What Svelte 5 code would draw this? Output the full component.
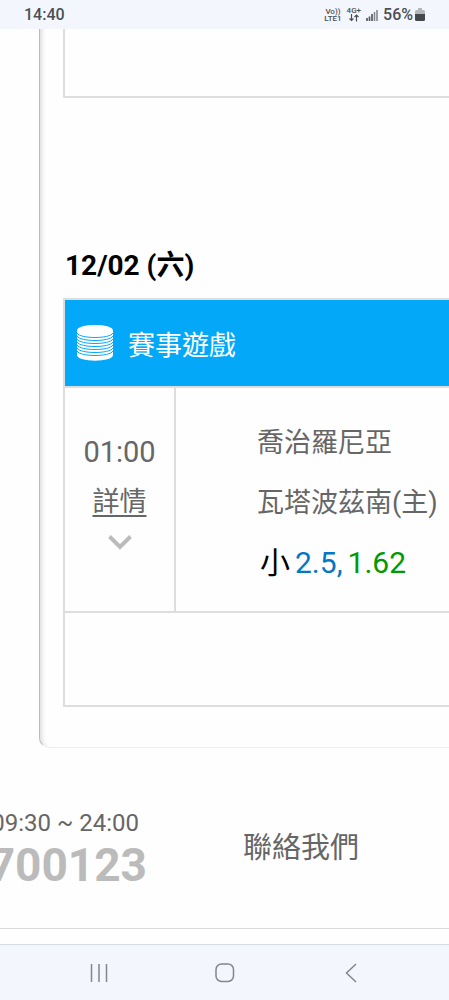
<script lang="ts">
  type Pick = { side: string; line: string; odds: string };
  type Match = { time: string; away: string; home: string; pick: Pick };

  const date = "12/02 (六)";
  const matches: Match[] = [
    {
      time: "01:00",
      away: "喬治羅尼亞",
      home: "瓦塔波茲南(主)",
      pick: { side: "小", line: "2.5,", odds: "1.62" },
    },
  ];
  const grooves = [8, 11, 14, 17, 20, 23, 26];
</script>

<div class="screen">
  <header class="status">
    <time>14:40</time>
    <div class="status-right">
      <div class="net"><span>Vo))</span><span>LTE1</span></div>
      <div class="net">
        <span>4G+</span>
        <svg width="10" height="8" viewBox="0 0 10 8" aria-hidden="true">
          <path d="M2.5 0v6.500M.5 4.500l2 2 2-2M7.500 7.500V1M5.500 3l2-2 2 2" fill="none" stroke="currentColor" stroke-width="1.200" />
        </svg>
      </div>
      <svg width="12" height="12" viewBox="0 0 12 12" aria-hidden="true">
        <path d="M1 12V9M3.5 12V7.5M6 12V5" stroke="#4c4f53" stroke-width="1.6" />
        <path d="M8.5 12V3M11 12V1" stroke="#85898d" stroke-width="1.6" />
      </svg>
      <span class="percent">56%</span>
      <svg width="10" height="13" viewBox="0 0 10 13" aria-hidden="true">
        <path d="M3 0h4v2h1.5q1.5 0 1.5 1.5V6H0V3.5Q0 2 1.5 2H3z" fill="#b4b7ba" />
        <path d="M0 6h10v5.5q0 1.5-1.5 1.5h-7Q0 13 0 11.5z" fill="#46494c" />
      </svg>
    </div>
  </header>

  <main class="sheet">
    <div class="prev-block"></div>

    <h2 class="date">{date}</h2>

    <table class="coupon">
      <thead>
        <tr>
          <th colspan="2">
            <div class="title">
              <svg width="36" height="36" viewBox="0 0 36 36" aria-hidden="true">
                <path d="M0 5.500C0-1.800 36-1.800 36 5.500V30C36 37.500 0 37.500 0 30z" fill="#fff" />
                {#each grooves as y (y)}
                  <path d="M0 {y}C3 {y + 6} 33 {y + 6} 36 {y}" fill="none" stroke="#03a9f8" stroke-width="1" />
                {/each}
              </svg>
              賽事遊戲
            </div>
          </th>
        </tr>
      </thead>
      <tbody>
        {#each matches as m (m.time)}
          <tr>
            <td class="when">
              <div class="stack">
                <time>{m.time}</time>
                <a href="#detail">詳情</a>
                <svg width="24" height="15" viewBox="0 0 24 15" aria-hidden="true">
                  <path d="M1.5 1.5 12 12 22.5 1.5" fill="none" stroke="#bbb" stroke-width="4" />
                </svg>
              </div>
            </td>
            <td class="teams">
              <div>{m.away}</div>
              <div>{m.home}</div>
              <div class="pick">
                <span>{m.pick.side}</span>
                <span class="line">{m.pick.line}</span>
                <span class="odds">{m.pick.odds}</span>
              </div>
            </td>
          </tr>
        {/each}
        <tr><td class="blank" colspan="2"></td></tr>
      </tbody>
    </table>
  </main>

  <footer class="footer">
    <div class="service">
      <span class="hours">09:30 ~ 24:00</span>
      <span class="phone">700123</span>
    </div>
    <a class="contact" href="#contact">聯絡我們</a>
  </footer>

  <nav class="navbar">
    <button aria-label="Recents">
      <svg width="18" height="18" viewBox="0 0 18 18">
        <path d="M1.5 0v18M9 0v18M16.5 0v18" />
      </svg>
    </button>
    <button aria-label="Home">
      <svg width="20" height="20" viewBox="0 0 20 20">
        <rect x="1" y="1" width="17.5" height="17.5" rx="5.5" />
      </svg>
    </button>
    <button aria-label="Back">
      <svg width="12" height="20" viewBox="0 0 12 20">
        <path d="M11 1 1.5 10l9.5 9" />
      </svg>
    </button>
  </nav>
</div>

<style>
  :global(body) {
    margin: 0;
    background: #fefefe;
  }

  .screen {
    min-height: 100vh;
    display: flex;
    flex-direction: column;
    overflow: hidden;
    font-family: Roboto, "Noto Sans CJK TC", sans-serif;
    color: #666;
  }

  /* status bar */
  .status {
    display: flex;
    align-items: center;
    justify-content: space-between;
    height: 29px;
    padding: 0 24px;
    background: #f3f7fd;
    color: #4c4f53;
    font-size: 16px;
    font-weight: 500;
  }
  .status-right {
    display: flex;
    align-items: center;
    gap: 5px;
  }
  .net {
    display: flex;
    flex-direction: column;
    align-items: center;
    font-size: 8px;
    font-weight: 500;
    line-height: 7px;
  }
  .percent {
    margin-right: -3px;
  }

  /* sheet */
  .sheet {
    margin-left: 39px;
    padding: 0 0 40px 23px;
    border: solid #eee;
    border-width: 0 0 1px 1px;
    border-left-color: #bbb;
    border-bottom-left-radius: 10px;
    box-shadow: inset 6px 0 4px -4px #ddd;
  }
  .prev-block {
    height: 67px;
    border: solid #ddd;
    border-width: 0 0 2px 2px;
  }
  .date {
    margin: 0;
    padding: 148px 0 12px 2px;
    font-size: 28px;
    line-height: 40px;
    color: #000;
  }

  .coupon {
    width: 100%;
    border-collapse: collapse;
  }
  .coupon th,
  .coupon td {
    padding: 0;
    border: 2px solid #ddd;
    border-right: 0;
  }
  .coupon th {
    height: 86px;
    background: #03a9f8;
    color: #fff;
    font-size: 27px;
    font-weight: 400;
  }
  .title {
    display: flex;
    align-items: center;
    gap: 15px;
    padding-left: 12px;
  }

  .when {
    width: 109px;
  }
  .stack {
    display: flex;
    flex-direction: column;
    align-items: center;
    padding-bottom: 22px;
    font-size: 29px;
    line-height: 50px;
  }
  .stack a {
    color: inherit;
    font-size: 27px;
    text-underline-offset: 4px;
    text-decoration-thickness: 2px;
  }
  .stack svg {
    margin-top: 8px;
  }

  .coupon .teams {
    height: 217px;
    padding: 6px 0 0 81px;
    font-size: 27px;
    line-height: 60px;
    white-space: nowrap;
  }
  .pick {
    display: flex;
    gap: 5px;
    padding-left: 3px;
    font-size: 30px;
    color: #000;
  }
  .line {
    color: #0277c4;
  }
  .odds {
    color: #090;
  }
  .coupon .blank {
    height: 92px;
  }

  /* footer */
  .footer {
    flex: 1;
    display: flex;
    align-items: flex-start;
    gap: 96px;
    margin-bottom: 15px;
    padding-top: 60px;
    border-bottom: 1px solid #d8dadc;
  }
  .service {
    display: flex;
    flex-direction: column;
    align-items: flex-end;
    width: 147px;
    white-space: nowrap;
  }
  .hours {
    padding-right: 8px;
    font-size: 24px;
    line-height: 30px;
  }
  .phone {
    font-size: 46px;
    font-weight: 700;
    line-height: 54px;
    color: #bbb;
  }
  .contact {
    padding-top: 20px;
    color: inherit;
    font-size: 29px;
    line-height: 40px;
    text-decoration: none;
    white-space: nowrap;
  }

  /* navigation bar */
  .navbar {
    display: flex;
    align-items: center;
    justify-content: center;
    gap: 78px;
    height: 55px;
    border-top: 1px solid #d5dde2;
    background: #f3f7fd;
  }
  .navbar button {
    display: grid;
    place-items: center;
    width: 48px;
    height: 48px;
    padding: 0;
    border: 0;
    background: none;
  }
  .navbar svg {
    fill: none;
    stroke: #83878b;
    stroke-width: 1.5;
  }
</style>
